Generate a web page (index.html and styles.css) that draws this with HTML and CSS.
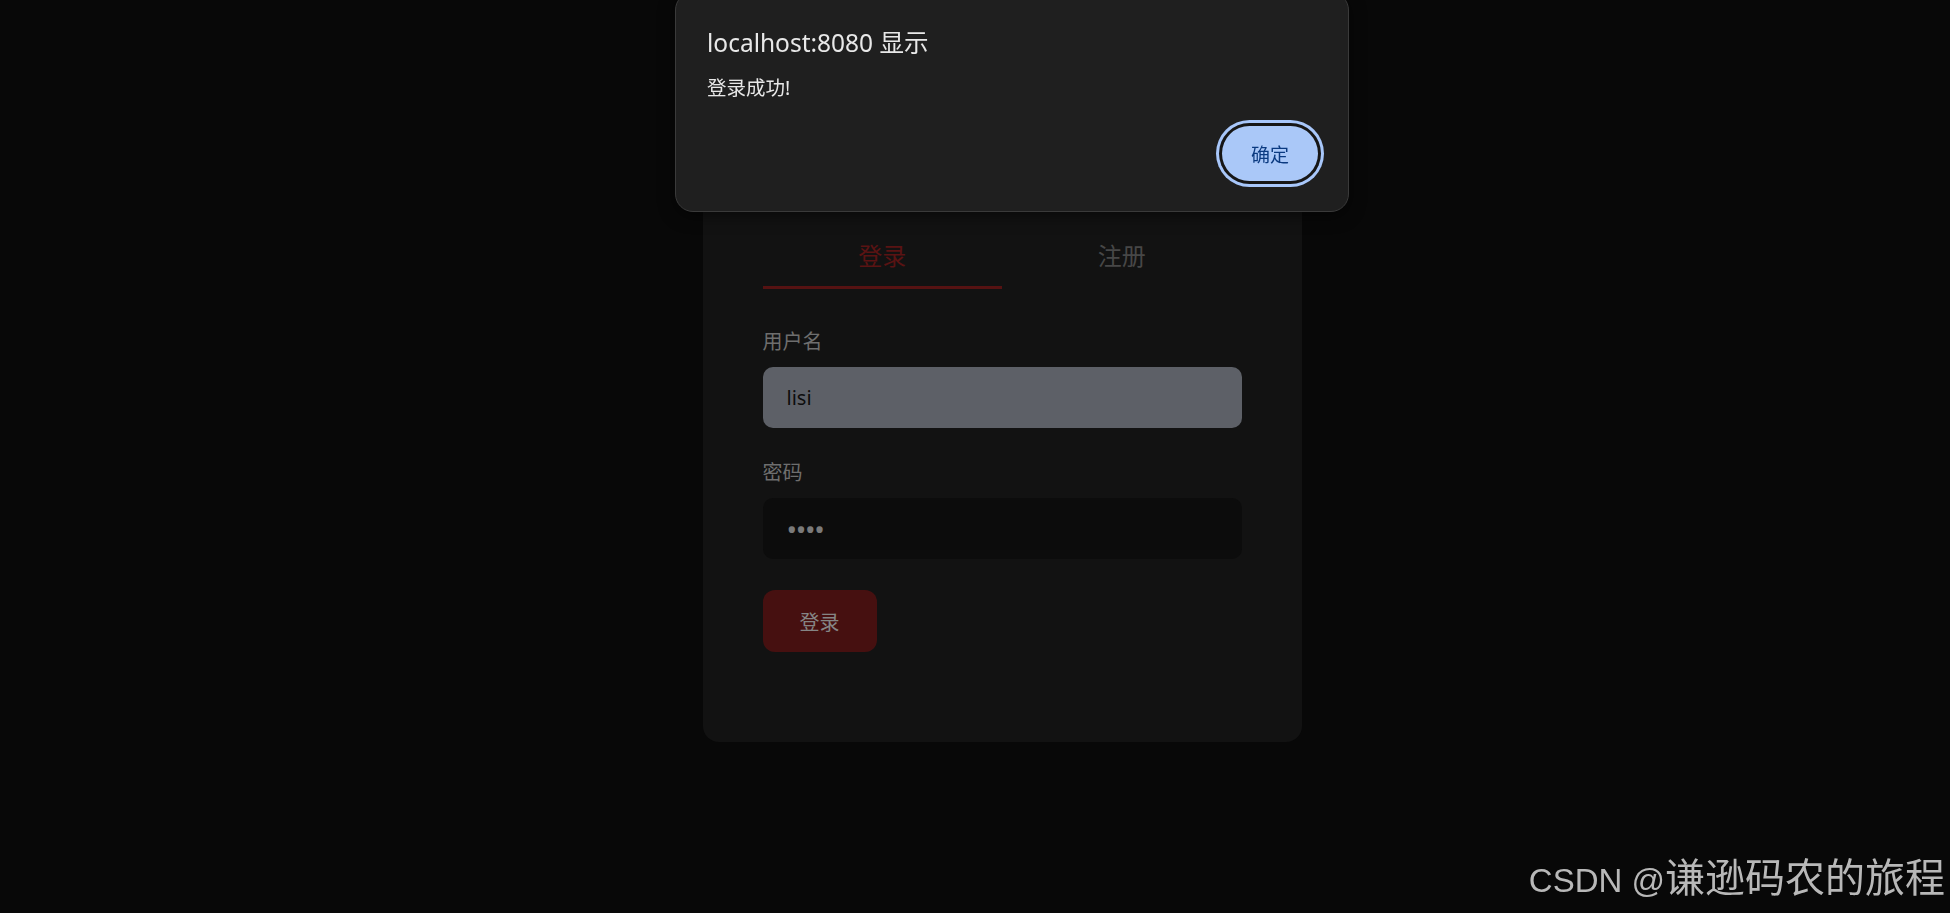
FILE: index.html
```html
<!DOCTYPE html>
<html lang="zh-CN">
  <head>
    <meta charset="UTF-8" />
    <meta name="viewport" content="width=device-width, initial-scale=1.0" />
    <title>登录</title>
    <link rel="stylesheet" href="styles.css">
  </head>
  <body>
    <div class="page">
      <div class="card">
        <div class="tabs">
          <div class="tab active">登录</div>
          <div class="tab">注册</div>
        </div>

        <form class="form">
          <label class="label">用户名</label>
          <input type="text" class="field filled" value="lisi" />

          <label class="label">密码</label>
          <input type="password" class="field secret" value="1234" />

          <button type="button" class="submit">登录</button>
        </form>
      </div>
    </div>

    <div class="dialog">
      <div class="dialog-title">localhost:8080 显示</div>
      <div class="dialog-msg">登录成功!</div>
      <div class="dialog-actions">
        <button type="button" class="dialog-ok">确定</button>
      </div>
    </div>

    <div class="watermark"><span class="wm-latin">CSDN @</span><span class="wm-cjk">谦逊码农的旅程</span></div>
  </body>
</html>
```

FILE: styles.css
```css
html,
body {
  margin: 0;
  height: 100%;
}
body {
  background: #080808;
  font-family: "Noto Sans", "Noto Sans CJK SC", sans-serif;
  overflow: hidden;
}
.page {
  display: flex;
  justify-content: center;
  align-items: flex-start;
  padding: 165px 0 0 54px;
}
.card {
  width: 599px;
  box-sizing: border-box;
  padding: 60px 60px 90px;
  background: #121212;
  border-radius: 16px;
}
.tabs {
  display: flex;
}
.tab {
  flex: 1;
  text-align: center;
  font-size: 24px;
  line-height: 30px;
  padding: 16px 0 15px;
  color: #474747;
  border-bottom: 3px solid transparent;
}
.tab.active {
  color: #5a1313;
  border-bottom-color: #561212;
}
.form {
  display: flex;
  flex-direction: column;
  align-items: flex-start;
}
.label {
  font-size: 20px;
  line-height: 28px;
  color: #6e6e6e;
  margin: 39px 0 11px;
}
.field + .label {
  margin-top: 31px;
}
.field {
  width: 100%;
  height: 61px;
  box-sizing: border-box;
  border: none;
  border-radius: 10px;
  padding: 0 24px;
  font-family: "Noto Sans", sans-serif;
  font-size: 20px;
  background: #0c0c0c;
  color: #7a7a7a;
  outline: none;
}
.field.filled {
  background: #5d6067;
  color: #0d0d0d;
}
.field.secret {
  font-size: 28px;
  letter-spacing: -1.3px;
}
.submit {
  margin-top: 31px;
  width: 114px;
  height: 62px;
  border: none;
  border-radius: 12px;
  background: #461010;
  color: #858585;
  font-family: "Noto Sans CJK SC", sans-serif;
  font-size: 20px;
}
.dialog {
  position: fixed;
  left: 675px;
  top: -8px;
  width: 674px;
  height: 220px;
  box-sizing: border-box;
  padding: 34px 30px 0 31px;
  background: #1f1f1f;
  border: 1px solid #3a3a3a;
  border-radius: 18px;
  box-shadow: 0 4px 16px rgba(0, 0, 0, 0.5);
  color: #e8e8e8;
}
.dialog-title {
  font-size: 24.5px;
  line-height: 32px;
}
.dialog-msg {
  margin-top: 16px;
  font-size: 19.5px;
  line-height: 26px;
}
.dialog-actions {
  display: flex;
  justify-content: flex-end;
  margin-top: 25px;
}
.dialog-ok {
  width: 96px;
  height: 55px;
  border: none;
  border-radius: 28px;
  background: #aac8f8;
  color: #0b3a80;
  font-family: "Noto Sans CJK SC", sans-serif;
  font-size: 19px;
  box-shadow: 0 0 0 3px #161616, 0 0 0 6px #a8c7fa;
}
.watermark {
  position: fixed;
  right: 5px;
  bottom: 16px;
  color: #b8b8b8;
  white-space: nowrap;
  line-height: 1;
}
.wm-latin {
  font-family: "Liberation Sans", sans-serif;
  font-size: 33px;
}
.wm-cjk {
  font-family: "Noto Sans CJK SC", sans-serif;
  font-size: 40px;
}
```
